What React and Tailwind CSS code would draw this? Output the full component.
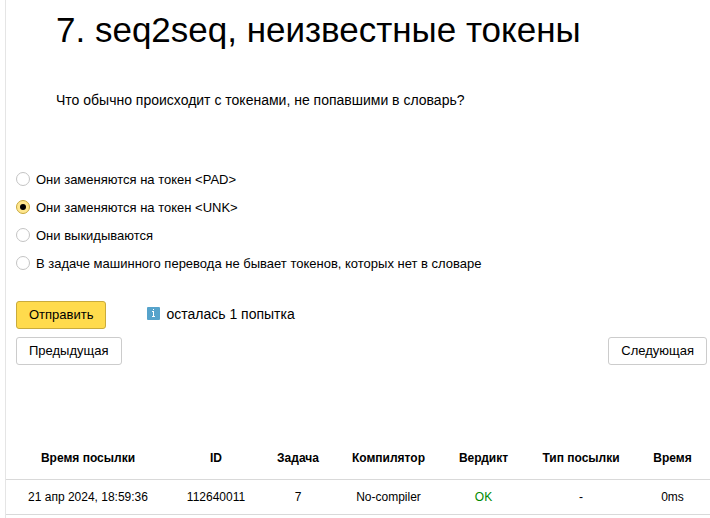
const options = [
  'Они заменяются на токен <PAD>',
  'Они заменяются на токен <UNK>',
  'Они выкидываются',
  'В задаче машинного перевода не бывает токенов, которых нет в словаре',
];

const columns = [
  { title: 'Время посылки', value: '21 апр 2024, 18:59:36', width: 'w-[164px]' },
  { title: 'ID', value: '112640011', width: 'w-[92px]' },
  { title: 'Задача', value: '7', width: 'w-[72px]' },
  { title: 'Компилятор', value: 'No-compiler', width: 'w-[109px]' },
  { title: 'Вердикт', value: 'OK', width: 'w-[81px]', cell: 'text-[#008a00]' },
  { title: 'Тип посылки', value: '-', width: 'w-[114px]' },
  { title: 'Время', value: '0ms', width: 'w-[72px] pr-[3px]', cell: 'pr-[3px]' },
];

function Radio({ label, checked }) {
  return (
    <label className="flex h-7 items-center gap-1.5 text-[13px] leading-4">
      <span
        className={
          checked
            ? 'flex size-3.5 shrink-0 items-center justify-center rounded-full border border-[#c8a83c] bg-[#ffe78f]'
            : 'flex size-3.5 shrink-0 items-center justify-center rounded-full border border-[#c4c4c4] bg-white'
        }
      >
        {checked && <span className="size-1.5 rounded-full bg-black" />}
      </span>
      <span className="pt-0.5">{label}</span>
    </label>
  );
}

function Button({ children, primary }) {
  return (
    <button
      className={
        primary
          ? 'h-7 rounded-[3px] border border-[#c9ab3c] bg-[#ffdb4d] px-3 text-[13px] leading-[26px]'
          : 'h-7 rounded-[3px] border border-[#cccccc] bg-white px-3 text-[13px] leading-[26px]'
      }
    >
      {children}
    </button>
  );
}

function InfoIcon() {
  return (
    <svg className="mb-px size-[13px]" viewBox="0 0 13 13">
      <rect width="13" height="13" rx="1" fill="#56a3cb" />
      <path d="M6 2h1v1H6zM5 4h2v5h1v1H5V9h1V5H5z" fill="#fff" />
    </svg>
  );
}

export default function App() {
  return (
    <div className="h-[518px] overflow-hidden bg-white pl-[5px] font-['Liberation_Sans',Arial,sans-serif] text-black">
      <main className="flex h-full flex-col border-l border-[#e5e5e5]">
        <h1 className="ml-[50px] h-[60px] whitespace-nowrap text-[35px] leading-[60px]">
          7. seq2seq, неизвестные токены
        </h1>
        <p className="mt-[30px] ml-[50px] text-sm leading-5">
          Что обычно происходит с токенами, не попавшими в словарь?
        </p>
        <div className="mt-[55px] ml-2.5 flex flex-col">
          {options.map((label, i) => (
            <Radio key={label} label={label} checked={i === 1} />
          ))}
        </div>
        <div className="mt-6 ml-2.5 flex items-center">
          <Button primary>Отправить</Button>
          <div className="ml-[41px] flex items-center gap-1.5 pb-0.5 text-sm leading-5">
            <InfoIcon />
            <span>осталась 1 попытка</span>
          </div>
        </div>
        <div className="mt-2 mr-[3px] ml-2.5 flex justify-between">
          <Button>Предыдущая</Button>
          <Button>Следующая</Button>
        </div>
        <table className="mt-[71px] w-[704px] table-fixed border-collapse text-center text-xs whitespace-nowrap">
          <thead>
            <tr className="h-[43px] border-b border-[#d9d9d9]">
              {columns.map((c) => (
                <th key={c.title} className={`pt-0.5 ${c.width}`}>
                  {c.title}
                </th>
              ))}
            </tr>
          </thead>
          <tbody>
            <tr className="h-[35px] border-b border-[#d9d9d9]">
              {columns.map((c) => (
                <td key={c.title} className={c.cell}>
                  {c.value}
                </td>
              ))}
            </tr>
          </tbody>
        </table>
      </main>
    </div>
  );
}
